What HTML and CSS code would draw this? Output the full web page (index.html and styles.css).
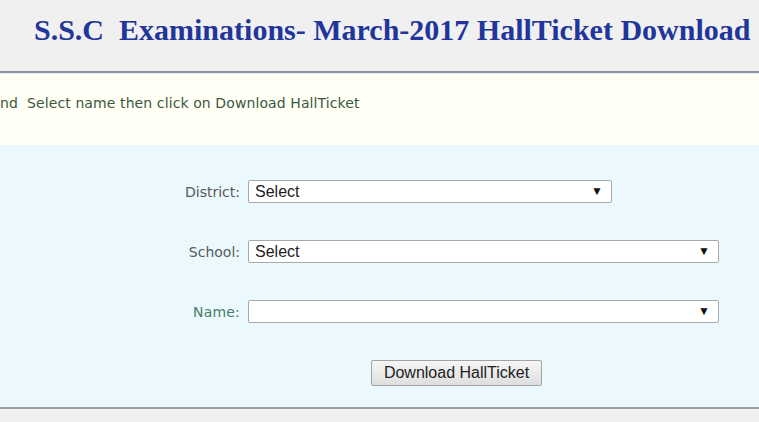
FILE: index.html
```html
<!DOCTYPE html>
<html>
<head>
<meta charset="utf-8">
<link rel="stylesheet" href="styles.css">
</head>
<body>
<div class="header">
  <h1 class="title">S.S.C&nbsp; Examinations- March-2017 HallTicket Download</h1>
</div>
<div class="info">
  <p class="info-text">nd&nbsp; Select name then click on Download HallTicket</p>
</div>
<div class="form-panel">
  <div class="row">
    <label class="lbl">District:</label>
    <div class="sel sel-short"><span class="sel-text">Select</span><span class="arrow">▼</span></div>
  </div>
  <div class="row">
    <label class="lbl">School:</label>
    <div class="sel sel-long"><span class="sel-text">Select</span><span class="arrow">▼</span></div>
  </div>
  <div class="row">
    <label class="lbl lbl-name">Name:</label>
    <div class="sel sel-long"><span class="sel-text"></span><span class="arrow">▼</span></div>
  </div>
  <div class="btn-row">
    <button class="btn">Download HallTicket</button>
  </div>
</div>
<div class="footer"></div>
</body>
</html>
```
FILE: styles.css
```css
html, body {
  margin: 0;
  padding: 0;
  background: #f0f0f0;
  overflow: hidden;
}
.header {
  height: 71px;
  background: #f0f0f1;
  display: flex;
  align-items: center;
  padding-left: 34px;
  box-sizing: border-box;
}
.title {
  margin: 0;
  font-family: "Liberation Serif", serif;
  font-weight: bold;
  font-size: 30px;
  color: #22359a;
  white-space: nowrap;
  margin-top: -11px;
}
.info {
  border-top: 2px solid #8d97a4;
  box-shadow: inset 0 1px 0 #e4ebf0;
  background: #fffff6;
  height: 74px;
  box-sizing: border-box;
  padding-top: 22px;
}
.info-text {
  margin: 0;
  font-family: "DejaVu Sans", Verdana, sans-serif;
  font-size: 14px;
  letter-spacing: 0.1px;
  color: #3c5840;
  white-space: nowrap;
}
.form-panel {
  background: #ebf8fd;
  height: 264px;
  box-sizing: border-box;
  padding-top: 35px;
  border-bottom: 2px solid #9aa0a0;
}
.row {
  display: flex;
  align-items: center;
  height: 23px;
  margin-bottom: 37px;
}
.lbl {
  width: 240px;
  text-align: right;
  font-family: "DejaVu Sans", Verdana, sans-serif;
  font-size: 14px;
  color: #555a5a;
  margin-right: 8px;
}
.lbl-name {
  color: #4a7c68;
  letter-spacing: 0.2px;
}
.sel {
  position: relative;
  height: 23px;
  box-sizing: border-box;
  border: 1px solid #a9a9a9;
  border-radius: 2px;
  background: #fff;
  display: flex;
  align-items: center;
  padding-left: 6px;
  font-family: "Liberation Sans", Arial, sans-serif;
  font-size: 16px;
  color: #222;
}
.sel-short { width: 364px; }
.sel-long { width: 471px; }
.arrow {
  position: absolute;
  right: 8px;
  top: 3px;
  font-size: 12px;
  color: #111;
}
.btn-row {
  padding-left: 371px;
  margin-top: 4px;
}
.btn {
  width: 171px;
  height: 26px;
  font-family: "Liberation Sans", Arial, sans-serif;
  font-size: 16px;
  color: #222;
  background: linear-gradient(#f6f6f6, #dedede);
  border: 1px solid #a3a3a3;
  border-radius: 2px;
  padding: 0;
}
.footer {
  height: 20px;
  background: #f0f0f0;
}
```
